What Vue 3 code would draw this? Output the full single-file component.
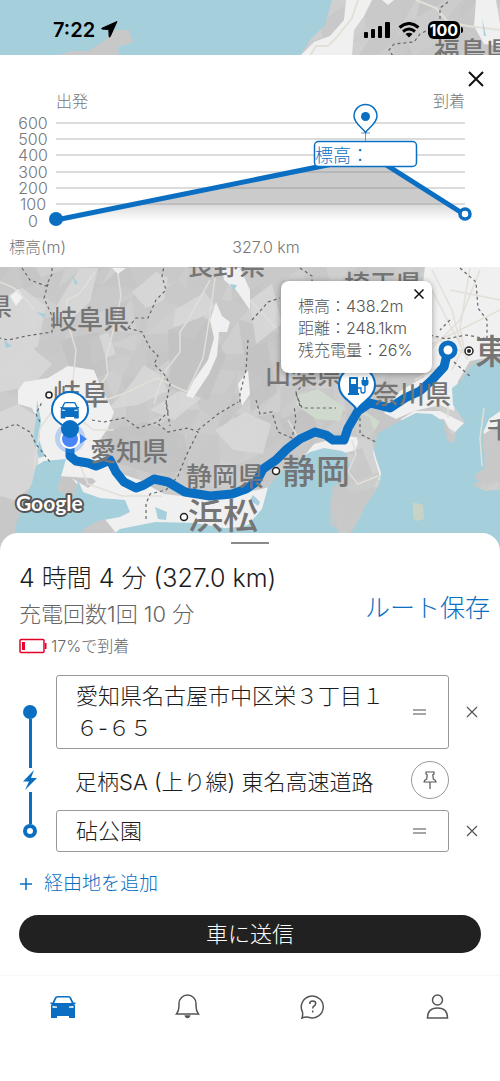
<template>
  <div class="screen">
    <svg class="map" viewBox="0 0 500 560" preserveAspectRatio="xMidYMin slice" aria-hidden="true">
      <rect width="500" height="560" fill="#c9c9c9"/>
      <g>
        <path v-for="(facet, i) in facets" :key="i" :d="facet.d" :fill="facet.fill" :stroke="facet.fill"/>
      </g>

      <!-- high plains and city areas -->
      <g fill="#dadada" opacity="0.8">
        <path d="M0 300l22-12 24 18-8 40-20 12-18-6zM80 268h18l-8 34-22 20-16-8 14-24zM132 292l24-20 12 6-4 22-18 8zM175 310l30-18 10 14-22 34-20-8zM0 352l30-6 22 18-20 22-32 6z"/>
        <path d="M130 385l14-20 16 10 8 16-30 14-30 4zM250 300l22-16 10 40-26 20zM90 340l18-8 8 22-24 10z"/>
        <path d="M0 412l18-8 22 14 4 36-14 34-16 12-14-4zM150 410l34-22 20 8-30 24zM215 430l30-18 26 12-8 30-30-4z"/>
      </g>
      <g fill="#c2c2c2" opacity="0.8">
        <path d="M168 330l36-14 22 40-18 44-38-12zM60 340l38-8 12 40-34 16zM105 432l40-10 40 14 4 34-36 4-40-12zM245 350l22-8 10 50-26 20zM280 420l30-14 8 24-28 14z"/>
      </g>
      <g fill="#f0f0f0">
        <path d="M18 390l6-8 24-4 20-12 26 4 8 20 12 22-6 16-12 18 14 24 30 10 20 12 34 16-8 10-32-2-24-14-18-6-20-18-34-2-20-8 2-44-8-16-14-4z"/>
        <path d="M216 302l6 14 8 6-3 10-8 0-2 24-8 18-16 24-7-2 8-16 14-20 6-22-4-18zM112 268h14l-8 6zM10 296l8-7 5 8-7 9z"/>
        <path d="M222 268h18l10 22v20l-14-20-12-10zM238 384l10-14 2 24-8 12z"/>
        <path d="M425 267h75v88l-30 6-12 20-4 30-14-6-26 6-18 8-12-6 16-22 24-14 6-30-10-40z"/>
        <path d="M400 420l14-9 26 0 24 12-12 12-8-16zM480 408l20-14v30l-16 10z"/>
        <path d="M72 478l16 10 12-10 32 16 32 0 50 6 60-14 20-18 20-24 30-8 20 2 20 10-2 30-6 4-14-34-34 10-30 30-22 36-50 4-66 0-40 10z"/>
      </g>
      <g fill="#cfd9cd">
        <path d="M298 395l20-6 26 18-4 14-24-2-20-14zM356 418l10-6 14 10-12 18-12-6zM345 488l22-12 12-4-2 14-20 6z"/>
      </g>

      <!-- sea -->
      <g fill="#a6cfdc">
        <path d="M36 466l8-5 22-2-6 21-3 10 13 8 5-2 3-16 5 12 17 6 25 2 5 12-10 5-22 4-14 8-10 12H14l2-16 8-22 8-20z"/>
        <path d="M100 545l20-16 35-7 40 1 35 6 18-4 14-16 6-22 6-7 14-14 22-14 14-4 18 3 4 2 6 18-8 14-11 7-2 14 5 15 5 23z"/>
        <path d="M346 540l10-15 9-18 14-22 2-12-6-18-3-13 8-10 22-12 14-7 16 1 12 8 5 18 5 3 3-13 8-7-7-11-5-7-1-17 8-6 8-12 9-9h25l1 48-14 10-6 14 2 30-3 16-9 6 12 6 19-2v62z"/>
        <path d="M37 400l4 20-2 20 6 16-6 2-6-18 3-20zM155 507l12 5-1 8-8-1zM253 495l7 7-2 4-8-6zM36 312l10 2-2 4zM4 340l8 6-6 2zM72 275l6 8-3 2zM230 284l7 1-3 6z"/>
        <path d="M0 0h332l-7 25-15 15-10 16H0z"/>
      </g>
      <g fill="#c8c8c8">
        <path d="M56 56l16-5 16 0 16-10 10-11 15 0 4 12-15 5 1 9z"/>
        <path d="M357 413l12 4 8 20-4 16 7 24-12 18-10 25-16 12-12-7 0-20 2-18 12-8 8-20 6-16-4-16zM443 424l12 8-3 12-5-4z" opacity="0.75"/>
        <path d="M478 472l10-4 12-10v22l-12 4-14-6z"/>
      </g>
      <path d="M413 502l10 3 1 14-8 2-3-3z" fill="#c7d4c5"/>

      <!-- status bar backdrop -->
      <path d="M346 0h26l-8 16-10 14-2 26h-52l14-14 16-6 14-16zM382 0h12l-6 5zM476 0h20l4 24v22l-16-2-10-18z" fill="#f0f0f0"/>
      <path d="M358 0l-6 18-16 20-8 8-12 0-6 10M416 0l20 8 12 14 20 4 32 4" fill="none" stroke="#e3e0d8" stroke-width="2"/>
      <path d="M482 18l4 18-2 0z" fill="#a6cfdc"/>
      <path class="border" d="M448 2l-8 6v16l-20 10-6 8-20 2-5 6 4 6"/>

      <!-- roads -->
      <g class="roads">
        <path d="M95 272l-16 22-12 6v20l9 30-3 30-6 22M118 274l3 22-6 28-9 34 2 16-12 18M210 280l-22 40-8 12 0 20-14 18-8 20-4 14M215 278l-4 30-8 50-16 34-30-14-34 16-30 10"/>
        <path d="M0 282l14 6 14 14 6 8M60 400l-20 28-6 40M80 420l14 10 20 0M78 460l10 24 34 12 40 0M250 300l26 28M288 420l8 14 0 14M352 440l4 14-8 18 10 12 20-8"/>
        <path d="M432 270l20 40 10 40-10 20M450 290l50 10M420 330l50 26M470 268l-10 60 6 30M400 360l40-20 60-30M438 390l10 14 0 14M484 408l-4 30 2 28M432 290l36 70M415 380l36-20M480 270l-20 50-30 30"/>
      </g>
      <g>
        <path class="border" d="M22 268l8 12 16 6 6-12 0-6M48 284l-4 14 8 18 0 16-26 4-18 4-8-2M128 328l8-10 12 0 8-18 10-10-4-14 2-10M128 328l14 4 8 16 8 8-4 8 10 10 6 10-4 20 4 22M0 430l16-6 14 8 6 12 14 18M40 422l-4-8 6-12"/>
        <path class="border" d="M92 420l12 2 20-4 14 10 20-6 10-10-2-12M158 424l10 8 20-4 10 4-12 24-8 20-12 14-16 4-4 10v16M198 430l20-16 20-12M248 340l-2 30-6 24 0 10"/>
        <path class="border" d="M300 268l12 8 0 8M252 320l16-18 12-4M300 406l-4-14 10-10 14 2M296 394l6 14 34 0M256 400l4 14 12-2 6 20 14 6 4-18-2-14M360 418l0 16 16 8M450 320l-10 10M430 335l16 4 20-4 22 4M460 268l16 14 2 26 9 12v18l12 4M454 362l18 16"/>
      </g>

      <polyline
        class="route"
        points="70,438 70,456 76,461 88,463 96,466 110,460 116,472 124,482 136,488 144,485 154,479 168,482 185,492 210,496 232,494 246,489 256,482 263,469 276,460 287,449 300,439 315,432 326,435 333,440 344,440 348,428 358,411 370,403 390,408 405,398 420,391 432,380 444,367 448,350"
      />

      <g class="place">
        <text x="434" y="61" font-size="26">福島県</text>
        <text x="187" y="275" font-size="26">長野県</text>
        <text x="-12" y="315" font-size="24">県</text>
        <text x="51" y="329" font-size="26">岐阜県</text>
        <text x="344" y="294" font-size="26">埼玉県</text>
        <text x="265" y="384" font-size="26">山梨県</text>
        <text x="373" y="404" font-size="26">奈川県</text>
        <text x="90" y="461" font-size="26">愛知県</text>
        <text x="186" y="486" font-size="26">静岡県</text>
        <text x="487" y="438" font-size="24">千</text>
        <text x="53" y="405" font-size="28">岐阜</text>
        <text x="475" y="364" font-size="34">東京</text>
        <text x="188" y="529" font-size="35">浜松</text>
        <text x="282" y="484" font-size="34">静岡</text>
      </g>
      <g fill="#fff" stroke="#222" stroke-width="1.5">
        <circle cx="49" cy="395" r="3"/>
        <circle cx="184" cy="517" r="3.5"/>
        <circle cx="276" cy="471" r="3.5"/>
        <circle cx="469" cy="351" r="4"/>
      </g>
      <circle cx="469" cy="351" r="2" fill="#222"/>
      <circle cx="448" cy="350" r="7" fill="#fff" stroke="#0a6fc2" stroke-width="5"/>

      <!-- current position -->
      <circle cx="70" cy="438" r="15" fill="#4285f4" opacity="0.3"/>
      <path d="M80 434l7 5-7 5z" fill="#3f86f5"/>
      <circle cx="70" cy="439" r="9" fill="#4a86f7" stroke="#fff" stroke-width="2"/>
      <path class="pin" d="M70 431c-5-6-18-9-18-21a18 18 0 0 1 36 0c0 12-13 15-18 21z"/>
      <circle cx="70" cy="429" r="9" fill="#0a6fc2"/>
      <g transform="translate(60 402) scale(.75)">
        <path :d="carPath" fill="#0a6fc2" fill-rule="evenodd"/>
      </g>

      <!-- charging stop -->
      <path class="pin" d="M357 410c-4-8-18-12-18-25a18 18 0 0 1 36 0c0 13-14 17-18 25z"/>
      <path fill="#0a6fc2" fill-rule="evenodd" d="M350 377h7a1 1 0 0 1 1 1v15h1v2h-11v-2h1v-15a1 1 0 0 1 1-1zM351 379v5h5v-5z"/>
      <path d="M358 388h3v3q0 2 2 2t2-2v-6" fill="none" stroke="#0a6fc2" stroke-width="1.3"/>
      <path d="M361.500 380h7v3q0 3-3.500 3t-3.500-3zM362.500 377h1.500v3h-1.500zM366 377h1.500v3h-1.500z" fill="#0a6fc2"/>

      <text class="google" x="16" y="511">Google</text>
    </svg>

    <header class="status-bar">
      <div class="status-time">
        <span>7:22</span>
        <svg width="17" height="17" viewBox="0 0 17 17"><path d="M16 .5 1 7.200q-1 .6.2.9l6.600.4.400 7q.3 1.200.9.200z" fill="#000" stroke="#000" stroke-linejoin="round"/></svg>
      </div>
      <div class="status-icons">
        <svg width="26" height="16" viewBox="0 0 26 16">
          <rect x="0" y="10" width="4" height="6" rx="1"/>
          <rect x="7" y="7" width="4" height="9" rx="1"/>
          <rect x="14" y="4" width="4" height="12" rx="1"/>
          <rect x="21" y="0" width="5" height="16" rx="1"/>
        </svg>
        <svg width="22" height="16" viewBox="0 0 22 16" fill="none" stroke="#000" stroke-width="3">
          <path d="M1.500 5.500q9.500-8 19 0M5 9.500q6-5 12 0"/>
          <path d="M11 15.500 7.500 12q3.500-2.500 7 0z" fill="#000" stroke="none"/>
        </svg>
        <span class="battery">100</span>
      </div>
    </header>

    <section class="elevation">
      <button class="close" type="button" aria-label="閉じる">
        <svg width="16" height="16" viewBox="0 0 16 16"><path d="M1 1l14 14M15 1 1 15" stroke="#111" stroke-width="2"/></svg>
      </button>
      <svg class="chart" viewBox="0 0 500 212">
        <defs>
          <linearGradient id="fade" gradientUnits="userSpaceOnUse" x1="0" y1="100" x2="0" y2="166">
            <stop offset="0" stop-color="#cbcbcb"/>
            <stop offset="0.7" stop-color="#cbcbcb"/>
            <stop offset="0.78" stop-color="#dedede"/>
            <stop offset="1" stop-color="#fff"/>
          </linearGradient>
        </defs>
        <g class="axis">
          <text x="56" y="52">出発</text>
          <text x="465" y="52" text-anchor="end">到着</text>
          <text x="9" y="198">標高(m)</text>
          <text x="266" y="198" text-anchor="middle">327.0 km</text>
        </g>
        <path d="M56 165 372 101 465 161V166H56z" fill="url(#fade)"/>
        <g v-for="tick in ticks" :key="tick.label" class="axis tick">
          <text x="33" :y="tick.y + 6" text-anchor="middle">{{ tick.label }}</text>
          <line v-if="tick.label" x1="56" x2="465" :y1="tick.y" :y2="tick.y"/>
        </g>
        <polyline points="56,165 372,101 462,158" fill="none" stroke="#0a6fc2" stroke-width="5"/>
        <circle cx="56" cy="164" r="7" fill="#0a6fc2"/>
        <circle cx="465" cy="159" r="5" fill="#fff" stroke="#0a6fc2" stroke-width="3.500"/>
        <path d="M365.500 78v10M361 78h9" stroke="#6d9fc0"/>
        <path d="M365.500 77.500c-3-5-11.500-9-11.500-16.500a11.500 11.500 0 0 1 23 0c0 7.500-8.500 11.500-11.500 16.500z" fill="#fff" stroke="#0a6fc2" stroke-width="1.500"/>
        <circle cx="365.500" cy="61.500" r="4.500" fill="#0a6fc2"/>
        <rect x="314.500" y="86.500" width="102" height="25" rx="4" fill="#fff" stroke="#0a6fc2" stroke-width="1.500"/>
        <text class="readout" x="315" y="107">標高：</text>
      </svg>
    </section>

    <div class="map-window">
      <div class="info">
        <button class="info-close" type="button" aria-label="閉じる">
          <svg width="10" height="10" viewBox="0 0 10 10"><path d="M.5.5l9 9M9.500.5l-9 9" stroke="#111" stroke-width="1.500"/></svg>
        </button>
        <p v-for="line in infoLines" :key="line">{{ line }}</p>
      </div>
    </div>

    <main class="sheet">
      <div class="grabber"></div>
      <div class="summary">
        <div>
          <h1>4 時間 4 分 (327.0 km)</h1>
          <p class="charges">充電回数1回 10 分</p>
          <p class="arrival">
            <svg width="28" height="16" viewBox="0 0 28 16">
              <rect x="1" y="1.500" width="24" height="13" rx="1" fill="none" stroke="#e4002b" stroke-width="1.500"/>
              <path d="M3 4h3v8H3zM26 5h1.500v6H26z" fill="#e4002b"/>
            </svg>
            <span>17%で到着</span>
          </p>
        </div>
        <button class="save" type="button">ルート保存</button>
      </div>

      <ol class="stops">
        <li v-for="stop in stops" :key="stop.id" :class="['stop', stop.kind]">
          <div class="rail">
            <i class="rail-line above"></i>
            <svg v-if="stop.kind === 'charge'" width="16" height="20" viewBox="0 0 16 20"><path d="M12 0 1 11.500h6L3 20 15 8H9z" fill="#0a6fc2"/></svg>
            <i v-else class="dot"></i>
            <i class="rail-line below"></i>
          </div>
          <template v-if="stop.kind === 'charge'">
            <div class="charge-stop">
              <span>{{ stop.name }}</span>
              <button class="pin-button" type="button" aria-label="固定">
                <svg width="14" height="18" viewBox="0 0 14 18" fill="none" stroke="#555" stroke-width="1.200">
                  <path d="M3 1h8v2l-1.200.8.500 4.200q2.700 1.200 2.700 3H1q0-1.800 2.700-3l.5-4.200L3 3zM7 11v7"/>
                </svg>
              </button>
            </div>
          </template>
          <template v-else>
            <div class="field">
              <textarea v-if="stop.kind === 'start'" v-model="stop.name" rows="2" aria-label="出発"></textarea>
              <input v-else v-model="stop.name" type="text" aria-label="到着">
              <button class="drag" type="button" aria-label="並べ替え">
                <svg width="13" height="6" viewBox="0 0 13 6"><path d="M0 1h13M0 5h13" stroke="#888" stroke-width="1.500"/></svg>
              </button>
            </div>
            <button class="remove" type="button" aria-label="削除">
              <svg width="12" height="12" viewBox="0 0 12 12"><path d="M1 1l10 10M11 1 1 11" stroke="#555" stroke-width="1.200"/></svg>
            </button>
          </template>
        </li>
      </ol>

      <button class="add" type="button">
        <svg width="12" height="12" viewBox="0 0 12 12"><path d="M6 0v12M0 6h12" stroke="#0a6fc2" stroke-width="1.500"/></svg>
        <span>経由地を追加</span>
      </button>
      <button class="send" type="button">車に送信</button>
    </main>

    <nav class="tabs">
      <a href="#car" aria-label="車">
        <svg width="28" height="26" viewBox="0 0 28 26"><path :d="carPath" fill="#0a6fc2" fill-rule="evenodd" transform="translate(1 2)"/></svg>
      </a>
      <a href="#notices" aria-label="通知">
        <svg width="28" height="26" viewBox="1 0 28 26" fill="none" stroke="#555" stroke-width="1.500">
          <path d="M3.500 20q2.500-3 2.500-8V9.500a8.500 8.500 0 0 1 17 0V12q0 5 2.500 8z"/>
          <path d="M12.500 22h4q-.5 1.500-2 1.500t-2-1.500z" fill="#555"/>
        </svg>
      </a>
      <a href="#help" aria-label="ヘルプ">
        <svg width="28" height="26" viewBox="1 0 28 26" fill="none" stroke="#555" stroke-width="1.500">
          <path d="M4 24q1-2.500.5-6A11 11 0 1 1 10.500 23.300Q8 22.500 4 24z"/>
          <path d="M11.700 10q0-3 3-3t3 2.500q0 1.500-1.600 2.500-1.400.8-1.400 2.500M14.700 16.500v2"/>
        </svg>
      </a>
      <a href="#account" aria-label="アカウント">
        <svg width="28" height="26" viewBox="1 0 28 26" fill="none" stroke="#555" stroke-width="1.500">
          <circle cx="14.500" cy="6" r="5"/>
          <path d="M4.500 24q0-10 10-10t10 10z"/>
        </svg>
      </a>
    </nav>
  </div>
</template>

<script setup>
import { ref } from 'vue';

const carPath = 'M7.500 0h11q1.800 0 2.600 1.500L23.500 6.500h2v1.500h-1.200q.7 1 .7 2V22h-6v-2H7v2H1V10q0-1 .7-2H.5V6.500h2L4.900 1.500Q5.700 0 7.500 0zM7.800 1.500q-1 0-1.500 1L4.300 7h17.400l-2-4.500q-.5-1-1.500-1zM2.500 10v1.800H7V10.600zM23.500 10v1.800H19V10.600z';

const ticks = [600, 500, 400, 300, 200, 100, 0].map((label, i) => ({
  label,
  y: [68, 84, 100, 117, 133, 149, 166][i]
}));

const infoLines = ['標高：438.2m', '距離：248.1km', '残充電量：26%'];

const stops = ref([
  { id: 1, kind: 'start', name: '愛知県名古屋市中区栄３丁目１６-６５' },
  { id: 2, kind: 'charge', name: '足柄SA (上り線) 東名高速道路' },
  { id: 3, kind: 'goal', name: '砧公園' }
]);

// Relief shading: a jittered triangle mesh in close greys
const buildFacets = () => {
  let seed = 11;
  const random = () => {
    seed = (seed * 16807) % 2147483647;
    return seed / 2147483647;
  };
  const shades = ['#c9c9c9', '#c6c6c6', '#cccccc', '#c9c9c9', '#cfcfcf', '#c8c8c8'];
  const size = 22;
  const cols = 25;
  const rows = 27;
  const points = [];
  for (let r = 0; r <= rows; r++) {
    for (let c = 0; c <= cols; c++) {
      points.push([
        Math.round((c - 0.5 + random() * 0.8) * size),
        Math.round((r - 0.5 + random() * 0.8) * size)
      ]);
    }
  }
  const list = [];
  for (let r = 0; r < rows; r++) {
    for (let c = 0; c < cols; c++) {
      const i = r * (cols + 1) + c;
      const corners = [points[i], points[i + 1], points[i + cols + 1], points[i + cols + 2]];
      list.push({ d: `M${corners[0]}L${corners[1]}L${corners[2]}z`, fill: shades[Math.floor(random() * 6)] });
      list.push({ d: `M${corners[1]}L${corners[3]}L${corners[2]}z`, fill: shades[Math.floor(random() * 6)] });
    }
  }
  return list;
};

const facets = buildFacets();
</script>

<style>
body {
  margin: 0;
  background: #fff;
}
</style>

<style scoped>
.screen {
  position: relative;
  display: flex;
  flex-direction: column;
  min-height: 100vh;
  font-family: Inter, "Noto Sans CJK JP", sans-serif;
  font-weight: 300;
  color: #1c1c1c;
  overflow: hidden;
}

button {
  display: inline-flex;
  align-items: center;
  justify-content: center;
  padding: 0;
  border: 0;
  background: none;
  font: inherit;
  color: inherit;
  cursor: pointer;
}

p,
h1 {
  margin: 0;
  font-weight: 300;
}

.map {
  position: absolute;
  top: 0;
  left: 0;
  width: 100%;
  height: 560px;
}

.border {
  fill: none;
  stroke: #666;
  stroke-width: 1.2;
  stroke-dasharray: 3 3;
}

.roads {
  fill: none;
  stroke: #e2dfd8;
  stroke-width: 1.5;
}

.place {
  fill: #757575;
  font-weight: 500;
}

.route {
  fill: none;
  stroke: #0a6fc2;
  stroke-width: 9;
  stroke-linejoin: round;
}

.pin {
  fill: #fff;
  stroke: #0a6fc2;
  stroke-width: 2;
}

.google {
  font-family: Lato, sans-serif;
  font-size: 21px;
  font-weight: 700;
  fill: #fff;
  stroke: #555;
  stroke-width: 4;
  stroke-linejoin: round;
  paint-order: stroke;
}

.status-bar {
  position: relative;
  display: flex;
  align-items: center;
  justify-content: space-between;
  height: 55px;
  padding: 4px 40px 0 53px;
  box-sizing: border-box;
  color: #000;
}

.status-time,
.status-icons {
  display: flex;
  align-items: center;
  gap: 8px;
}

.status-time {
  gap: 6px;
  font-size: 20px;
  font-weight: 600;
}

.battery {
  position: relative;
  padding: 0 2px;
  border-radius: 6px;
  background: #000;
  color: #fff;
  font-size: 16px;
  font-weight: 700;
  line-height: 18px;
}

.battery::after {
  content: "";
  position: absolute;
  top: 6px;
  right: -3px;
  width: 2px;
  height: 6px;
  border-radius: 0 2px 2px 0;
  background: #000;
}

.elevation {
  position: relative;
  background: #fff;
}

.close {
  position: absolute;
  top: 8px;
  right: 8px;
  width: 32px;
  height: 32px;
}

.chart {
  display: block;
  width: 100%;
}

.axis {
  font-size: 16px;
  fill: #777;
}

.tick line {
  stroke: #888;
  stroke-opacity: 0.6;
}

.readout {
  font-size: 18px;
  fill: #0a6fc2;
}

.map-window {
  position: relative;
  height: 266px;
}

.info {
  position: absolute;
  top: 14px;
  right: 68px;
  width: 134px;
  padding: 14px 0 12px 17px;
  border-radius: 8px;
  background: #fff;
  box-shadow: 0 1px 6px rgba(0, 0, 0, 0.35);
  font-size: 16px;
  line-height: 22px;
  color: #555;
  white-space: nowrap;
}

.info-close {
  position: absolute;
  top: 3px;
  right: 3px;
  width: 20px;
  height: 20px;
}

.sheet {
  position: relative;
  padding: 9px 19px 22px;
  border-radius: 18px 18px 0 0;
  background: #fff;
}

.grabber {
  width: 38px;
  height: 2px;
  margin: 0 auto;
  background: #8a8a8a;
}

.summary {
  display: flex;
  align-items: center;
  justify-content: space-between;
  margin: 16px -9px 0 0;
}

h1 {
  font-size: 25px;
  line-height: 36px;
}

.charges {
  font-size: 22px;
  line-height: 37px;
  color: #666;
}

.arrival {
  display: flex;
  align-items: center;
  gap: 4px;
  font-size: 16px;
  line-height: 26px;
  color: #666;
}

.save {
  padding-bottom: 4px;
  font-size: 25px;
  line-height: 32px;
  color: #0a6fc2;
}

.stops {
  margin: 16px -14px 0 0;
  padding: 0;
  list-style: none;
  font-size: 22px;
}

.stop {
  display: grid;
  grid-template-columns: 22px minmax(0, 1fr) 46px;
}

.rail {
  display: flex;
  flex-direction: column;
  align-items: center;
}

.rail-line {
  flex: 1;
  width: 3px;
  background: #0a6fc2;
}

.start .above,
.goal .below {
  background: none;
}

.charge .rail {
  gap: 2px;
}

.dot {
  width: 14px;
  height: 14px;
  border-radius: 50%;
  background: #0a6fc2;
  box-sizing: border-box;
}

.goal .dot {
  border: 4px solid #0a6fc2;
  background: #fff;
}

.field {
  display: flex;
  margin-left: 15px;
  border: 1px solid #999;
  border-radius: 3px;
}

.field textarea,
.field input {
  flex: 1;
  min-width: 0;
  padding: 4px 0 4px 19px;
  border: 0;
  outline: 0;
  background: none;
  font: inherit;
  line-height: 32px;
  color: inherit;
  resize: none;
  overflow: hidden;
}

.field input {
  height: 32px;
}

.drag {
  width: 58px;
}

.charge-stop {
  display: flex;
  align-items: center;
  justify-content: space-between;
  height: 61px;
  padding-left: 34px;
  white-space: nowrap;
}

.pin-button {
  width: 38px;
  height: 38px;
  border: 1px solid #999;
  border-radius: 50%;
  box-sizing: border-box;
}

.add {
  gap: 12px;
  margin-top: 18px;
  padding-left: 1px;
  font-size: 19px;
  line-height: 28px;
  color: #0a6fc2;
}

.send {
  display: flex;
  width: 100%;
  height: 38px;
  margin-top: 17px;
  padding-bottom: 4px;
  border-radius: 19px;
  background: #212121;
  font-size: 22px;
  color: #fff;
}

.tabs {
  position: relative;
  flex: 1;
  display: grid;
  grid-template-columns: repeat(4, 1fr);
  align-items: start;
  padding-top: 18px;
  border-top: 1px solid #f8f8f8;
  background: #fff;
}

.tabs a {
  display: flex;
  justify-content: center;
}
</style>
